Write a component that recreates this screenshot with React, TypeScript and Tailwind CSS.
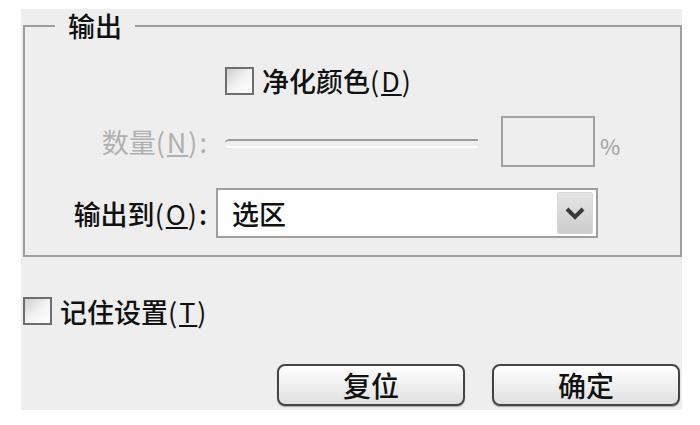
import React from "react";

const font = { fontFamily: '"Noto Sans CJK SC", "Noto Sans", sans-serif' };

function CheckBox() {
  return (
    <span className="inline-block h-[28px] w-[29px] shrink-0 border-2 border-[#6e6e6e] bg-gradient-to-br from-[#d0d0d0] via-[#f2f2f2] to-white" />
  );
}

function Mnemonic({ k }: { k: string }) {
  return (
    <span className="font-normal tracking-[2px]">
      (<span className="underline underline-offset-2">{k}</span>)
    </span>
  );
}

function DialogButton({ label }: { label: string }) {
  return (
    <button className="flex h-[42px] w-[188px] items-center justify-center rounded-[8px] border-2 border-[#444] bg-gradient-to-b from-white to-[#e0e0e0] text-[28px] font-medium leading-none text-[#111] shadow-[0_1px_1px_rgba(0,0,0,0.3)]">
      {label}
    </button>
  );
}

export default function App() {
  return (
    <div className="h-[425px] w-[700px] bg-white pl-[21px] pt-[9px]" style={font}>
      <div className="flex h-[401px] w-[661px] flex-col bg-[#eeeeee] pt-[3px] text-[27px] font-medium leading-none text-[#111]">
        {/* Output group */}
        <fieldset className="ml-[2px] border-2 border-[#9e9e9e]">
          <legend className="ml-[30px] px-[13px] text-[27px] leading-[28px]">输出</legend>

          <div className="mt-[26px] flex h-[29px] items-center pl-[200px]">
            <CheckBox />
            <span className="ml-[8px]">
              净化颜色<Mnemonic k="D" />
            </span>
          </div>

          <div className="mt-[21px] flex h-[51px] items-center">
            <span className="w-[182px] text-right font-normal text-[#b0b0b0]">
              数量<Mnemonic k="N" />:
            </span>
            <div className="ml-[18px] mt-[4px] h-[9px] w-[253px] rounded-l-full border-b-2 border-t-2 border-b-white border-t-[#9c9c9c]" />
            <div className="ml-[23px] h-[51px] w-[94px] border-2 border-[#a2a2a2]" />
            <span className="ml-[5px] mt-[6px] text-[22px] font-normal text-[#a0a0a0]">%</span>
          </div>

          <div className="mb-[17px] mt-[21px] flex h-[50px] items-center">
            <span className="w-[182px] text-right">
              输出到<Mnemonic k="O" />:
            </span>
            <div className="ml-[9px] flex h-[50px] w-[382px] items-center justify-between border-2 border-[#9e9e9e] bg-white pl-[14px] pr-[3px]">
              <span>选区</span>
              <span className="flex h-[42px] w-[36px] items-center justify-center rounded-[3px] bg-gradient-to-b from-[#e6e6e6] to-[#cbcbcb] shadow-[inset_0_0_0_1px_#d8d8d8]">
                <svg width="22" height="14" viewBox="0 0 22 14">
                  <polyline points="3,3 11,11 19,3" fill="none" stroke="#3a3a3a" strokeWidth="4" />
                </svg>
              </span>
            </div>
          </div>
        </fieldset>

        {/* Remember settings */}
        <div className="ml-[2px] mt-[40px] flex h-[28px] items-center">
          <CheckBox />
          <span className="ml-[8px]">
            记住设置<Mnemonic k="T" />
          </span>
        </div>

        <div className="mt-[39px] flex justify-end gap-[27px] pr-[2px]">
          <DialogButton label="复位" />
          <DialogButton label="确定" />
        </div>
      </div>
    </div>
  );
}
